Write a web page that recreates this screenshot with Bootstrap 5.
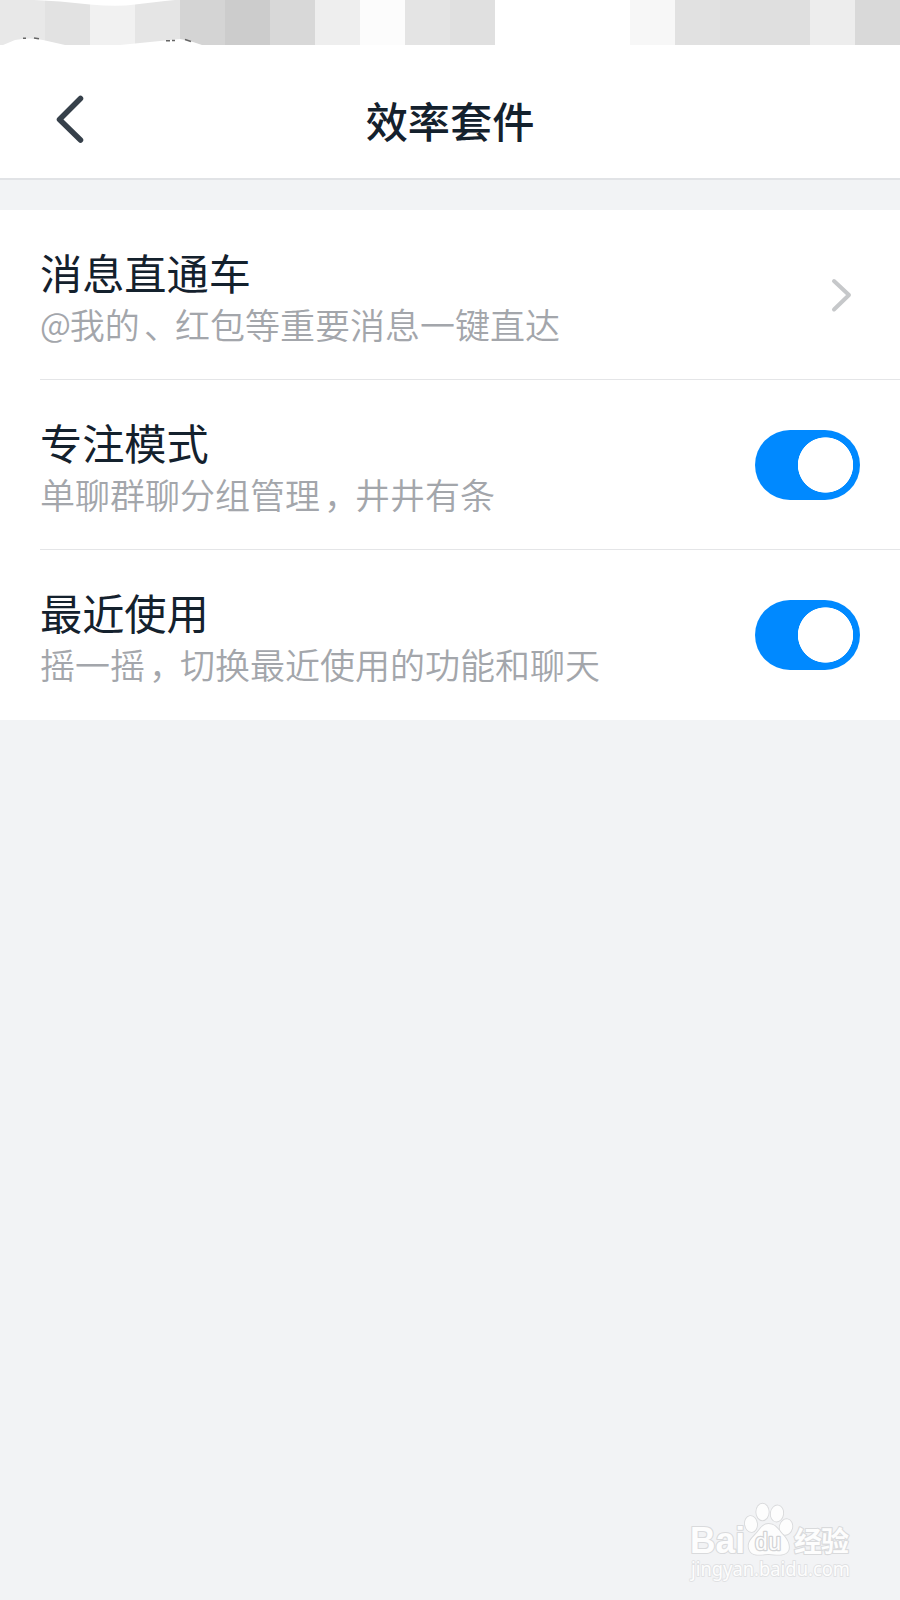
<!DOCTYPE html>
<html lang="zh-CN">
<head>
<meta charset="utf-8">
<meta name="viewport" content="width=device-width, initial-scale=1">
<title>效率套件</title>
<link href="https://cdn.jsdelivr.net/npm/bootstrap@5.3.0/dist/css/bootstrap.min.css" rel="stylesheet">
<style>
  body { background: #f2f3f5; font-family: "Noto Sans CJK SC", sans-serif; color: #14212d; }
  .screen { width: 900px; height: 1600px; }
  .status-strip { height: 45px; }
  .app-header { height: 135px; padding: 15px 54px 0; border-bottom: 2px solid #e1e3e6; }
  .app-header h1 { font-size: 42.2px; font-weight: 500; line-height: 60px; margin: 1px 0 0; }
  .side { width: 32px; }
  .back-btn { line-height: 0; }
  .settings { margin-top: 30px; }
  .setting { height: 170px; margin-left: 40px; padding: 0 40px 0 0; border-bottom: 1px solid #e4e5e7; }
  .setting:last-child { border-bottom: 0; }
  .setting-text { padding-bottom: 2px; }
  .setting-name { font-size: 42.2px; line-height: 60px; font-weight: 400; }
  .setting-note { font-size: 35px; line-height: 44px; color: #a3a6ab; font-weight: 350; }
  .at-sign { font-size: 33px; letter-spacing: -1px; vertical-align: 2px; line-height: 1; }
  .punct { margin-left: 4px; letter-spacing: -4px; }
  .form-switch .form-check-input.toggle {
    width: 105px; height: 70px; margin: 0; border: 0; border-radius: 35px; box-shadow: none;
    background: radial-gradient(circle 28px at 70.5px 35px, #fff 97.5%, #0089ff 100%);
  }
  .brand { right: 40px; bottom: 10px; }
</style>
</head>
<body>
<div class="screen position-relative overflow-hidden">
  <div class="status-strip bg-white">
    <svg class="d-block" width="900" height="45" viewBox="0 0 900 45">
      <g shape-rendering="crispEdges">
        <path fill="#e8e8e8" d="M0 0h45v45H0z"/><path fill="#e2e2e2" d="M45 0h45v45H45z"/>
        <path fill="#f1f1f1" d="M90 0h45v45H90z"/><path fill="#e5e5e5" d="M135 0h45v45h-45z"/>
        <path fill="#d4d4d4" d="M180 0h45v45h-45z"/><path fill="#cccccc" d="M225 0h45v45h-45z"/>
        <path fill="#d8d8d8" d="M270 0h45v45h-45z"/><path fill="#eeeeee" d="M315 0h45v45h-45z"/>
        <path fill="#fcfcfc" d="M360 0h45v45h-45z"/><path fill="#e4e4e4" d="M405 0h45v45h-45z"/>
        <path fill="#e0e0e0" d="M450 0h45v45h-45z"/><path fill="#f7f7f7" d="M630 0h45v45h-45z"/>
        <path fill="#e1e1e1" d="M675 0h45v45h-45z"/><path fill="#dfdfdf" d="M720 0h90v45h-90z"/>
        <path fill="#ededed" d="M810 0h45v45h-45z"/><path fill="#d9d9d9" d="M855 0h45v45h-45z"/>
      </g>
      <path fill="#fff" d="M34 0 60 1.500 90 4.500Q118 7 135 4.500L165 1 175 0z"/>
      <path fill="#fff" d="M3 45 15 40Q30 37 43 40L65 45zM120 45 150 42 180 39 190 41 202 45z"/>
      <path stroke="#666" stroke-width="1.500" fill="none" d="M23 38.200h3M34 38l5 .8M166 40.800h4M172 40.500h3M185 39.500l6 2"/>
    </svg>
  </div>

  <header class="app-header bg-white d-flex align-items-center justify-content-between">
    <a href="#" class="back-btn side" aria-label="返回">
      <svg width="32" height="50" viewBox="0 0 32 50" fill="none" stroke="#36404a" stroke-width="5.500" stroke-linecap="round" stroke-linejoin="round"><path d="M26.500 4.500 5.500 25.500 26.500 46"/></svg>
    </a>
    <h1>效率套件</h1>
    <span class="side"></span>
  </header>

  <main class="settings bg-white">
    <div class="setting d-flex align-items-center justify-content-between">
      <div class="setting-text">
        <div class="setting-name">消息直通车</div>
        <div class="setting-note"><span class="at-sign">@</span>我的<span class="punct">、</span>红包等重要消息一键直达</div>
      </div>
      <svg width="36" height="40" viewBox="0 0 36 40" fill="none" stroke="#c6c8ca" stroke-width="4" stroke-linecap="round" stroke-linejoin="round"><path d="M10 6 25 20 10 34.500"/></svg>
    </div>
    <div class="setting d-flex align-items-center justify-content-between">
      <div class="setting-text">
        <div class="setting-name">专注模式</div>
        <div class="setting-note">单聊群聊分组管理<span class="punct">，</span>井井有条</div>
      </div>
      <div class="form-check form-switch p-0 m-0 lh-1 d-flex"><input class="form-check-input toggle" type="checkbox" role="switch" aria-label="专注模式" checked></div>
    </div>
    <div class="setting d-flex align-items-center justify-content-between">
      <div class="setting-text">
        <div class="setting-name">最近使用</div>
        <div class="setting-note">摇一摇<span class="punct">，</span>切换最近使用的功能和聊天</div>
      </div>
      <div class="form-check form-switch p-0 m-0 lh-1 d-flex"><input class="form-check-input toggle" type="checkbox" role="switch" aria-label="最近使用" checked></div>
    </div>
  </main>

  <svg class="brand position-absolute overflow-visible" width="180" height="100" viewBox="0 0 180 100" fill="#fdfdfd" stroke="#d9dadc" stroke-width="2.200" paint-order="stroke" stroke-linejoin="round">
    <g stroke-width="1.800">
      <ellipse cx="71" cy="34" rx="6" ry="8" transform="rotate(-8 71 34)"/>
      <ellipse cx="82.500" cy="22" rx="6.200" ry="8.300"/>
      <ellipse cx="97" cy="23.500" rx="6.200" ry="8" transform="rotate(8 97 23.500)"/>
      <ellipse cx="106" cy="37" rx="6.200" ry="7.800" transform="rotate(12 106 37)"/>
      <path d="M88.500 34C82 34 80 40 75 45C70 50 67 54 69.500 60C72 66 79 65 88.500 64C98 65 106 66 108.500 60C110 54 107 49 102 44C98 39 95 34 88.500 34z"/>
    </g>
    <text x="10" y="63" font-family="Liberation Sans, sans-serif" font-weight="700" font-size="36" textLength="55" lengthAdjust="spacingAndGlyphs">Bai</text>
    <text x="75" y="59.500" font-family="Liberation Sans, sans-serif" font-size="23" textLength="26" stroke-width="2.600" stroke="#d2d3d5">du</text>
    <text x="114" y="62" font-family="Noto Sans CJK SC, sans-serif" font-weight="700" font-size="28" textLength="55">经验</text>
    <text x="11" y="85.500" font-family="Noto Sans, sans-serif" font-size="19" textLength="159" lengthAdjust="spacingAndGlyphs" stroke-width="1.800" stroke="#e0e1e3">jingyan.baidu.com</text>
  </svg>
</div>
<script src="https://cdn.jsdelivr.net/npm/bootstrap@5.3.0/dist/js/bootstrap.bundle.min.js"></script>
</body>
</html>
